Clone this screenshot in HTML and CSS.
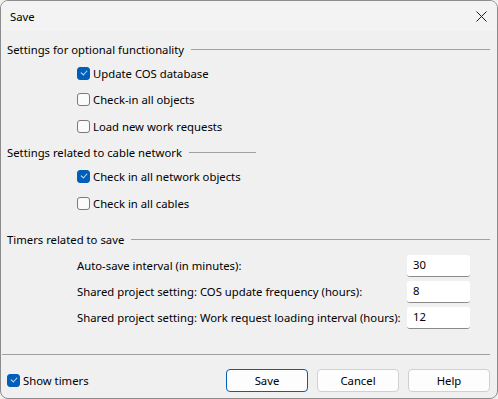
FILE: index.html
```html
<!DOCTYPE html>
<html lang="en">

<head>
    <meta charset="utf-8">
    <title>Save</title>
    <link rel="stylesheet" href="styles.css">
</head>

<body>
    <div class="window">
        <div class="titlebar">
            <span class="title">Save</span>
            <svg class="close" width="11" height="11" viewBox="0 0 11 11">
                <path d="M0.5 0.5 L10.5 10.5 M10.5 0.5 L0.5 10.5" stroke="#1a1a1a" stroke-width="1" fill="none" />
            </svg>
        </div>

        <div class="content">
            <div class="group-head">
                <span>Settings for optional functionality</span>
                <div class="rule"></div>
            </div>
            <label class="check-row first"><span class="box checked"></span>Update COS database</label>
            <label class="check-row"><span class="box"></span>Check-in all objects</label>
            <label class="check-row"><span class="box"></span>Load new work requests</label>

            <div class="group-head short">
                <span>Settings related to cable network</span>
                <div class="rule"></div>
            </div>
            <label class="check-row first"><span class="box checked"></span>Check in all network objects</label>
            <label class="check-row"><span class="box"></span>Check in all cables</label>

            <div class="group-head timers">
                <span>Timers related to save</span>
                <div class="rule"></div>
            </div>
            <div class="timer-row first">
                <span class="timer-label">Auto-save interval (in minutes):</span>
                <div class="field">30</div>
            </div>
            <div class="timer-row">
                <span class="timer-label">Shared project setting: COS update frequency (hours):</span>
                <div class="field">8</div>
            </div>
            <div class="timer-row">
                <span class="timer-label">Shared project setting: Work request loading interval (hours):</span>
                <div class="field">12</div>
            </div>
        </div>

        <div class="footer">
            <label class="show-timers"><span class="box checked"></span>Show timers</label>
            <div class="buttons">
                <button class="btn default">Save</button>
                <button class="btn">Cancel</button>
                <button class="btn">Help</button>
            </div>
        </div>
    </div>
</body>

</html>
```

FILE: styles.css
```css
body {
    margin: 0;
    font-family: "Noto Sans", "Open Sans", sans-serif;
    font-size: 11.3px;
    color: #000;
    background: #f0f0f0;
}

.window {
    width: 498px;
    height: 399px;
    box-sizing: border-box;
    border: 1px solid #8c8c8c;
    border-radius: 8px;
    overflow: hidden;
    background: #f0f0f0;
    display: flex;
    flex-direction: column;
}

.titlebar {
    height: 30px;
    flex: none;
    background: #f3f3f3;
    display: flex;
    align-items: center;
    justify-content: space-between;
    padding: 0 9px 0 9px;
}

.close {
    margin-right: 1px;
}

.content {
    flex: 1;
    padding: 8px 0 0 6px;
}

.group-head {
    height: 20px;
    display: flex;
    align-items: center;
    width: 483px;
}

.group-head span {
    white-space: nowrap;
}

.group-head .rule {
    flex: 1;
    height: 1px;
    background: #a0a0a0;
    margin-left: 7px;
}

.group-head.short {
    width: 249px;
    margin-top: 3px;
}

.group-head.timers {
    margin-top: 13px;
}

.check-row {
    height: 26.5px;
    display: flex;
    align-items: center;
    padding-left: 70px;
}

.check-row.first {
    margin-top: 1px;
}

.box {
    width: 13px;
    height: 13px;
    box-sizing: border-box;
    border: 1px solid #7a7a7a;
    border-radius: 3px;
    background: #fbfbfb;
    margin-right: 3px;
    flex: none;
    position: relative;
}

.box.checked {
    background: #005fb8;
    border-color: #005fb8;
}

.box.checked::after {
    content: "";
    position: absolute;
    left: 3px;
    top: 2px;
    width: 5px;
    height: 3px;
    border-left: 1px solid #cfe2f5;
    border-bottom: 1px solid #cfe2f5;
    transform: rotate(-48deg);
}

.timer-row {
    height: 26px;
    display: flex;
    align-items: center;
    justify-content: space-between;
    padding-left: 70px;
    width: 393px;
}

.timer-row.first {
    margin-top: 3px;
}

.timer-label {
    white-space: nowrap;
}

.field {
    width: 63px;
    height: 22px;
    box-sizing: border-box;
    background: #fff;
    border-bottom: 1px solid #8a8a8a;
    border-radius: 3px;
    padding: 2px 0 0 6px;
    line-height: 16px;
}

.footer {
    flex: none;
    border-top: 1px solid #a0a0a0;
    margin: 0 7px 0 1px;
    padding: 14px 0 6px 5px;
    display: flex;
    align-items: center;
    justify-content: space-between;
}

.show-timers {
    display: flex;
    align-items: center;
}

.buttons {
    display: flex;
    gap: 9px;
}

.btn {
    width: 82px;
    height: 23px;
    box-sizing: border-box;
    border: 1px solid #d0d0d0;
    border-radius: 4px;
    background: #fdfdfd;
    font-family: inherit;
    font-size: inherit;
    color: #000;
    padding: 0;
}

.btn.default {
    border-color: #005fb8;
}
```
